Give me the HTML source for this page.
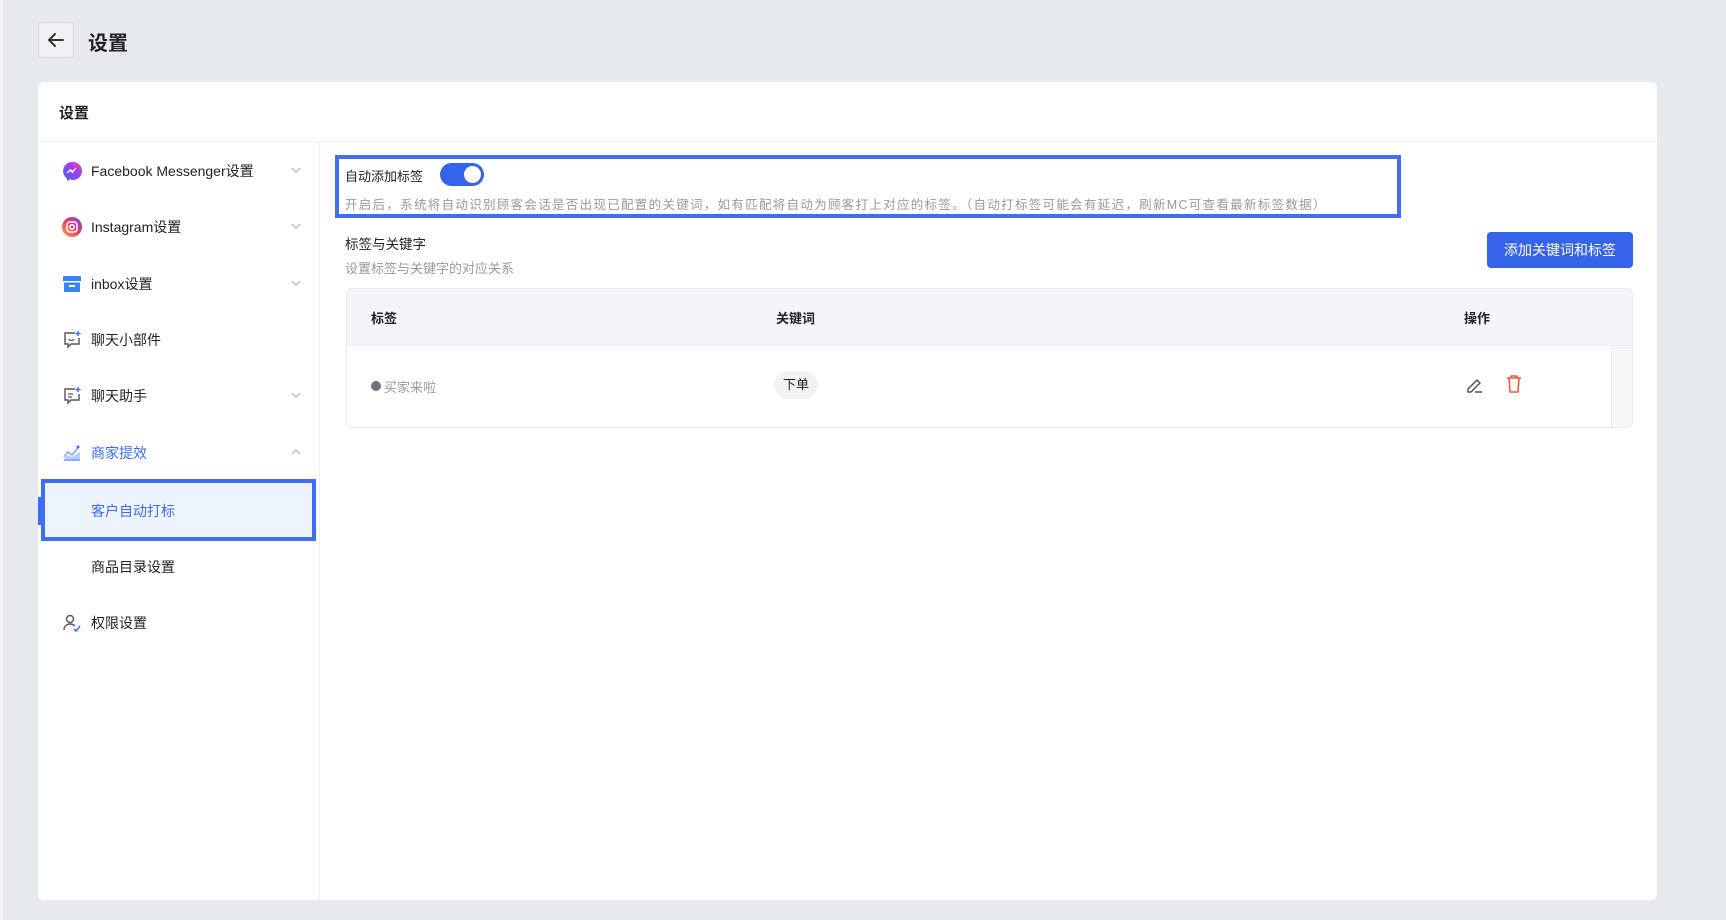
<!DOCTYPE html>
<html><head><meta charset="utf-8">
<style>
*{box-sizing:border-box;margin:0;padding:0}
body{width:1726px;height:920px;background:#e6e9ee;font-family:"Liberation Sans","Noto Sans CJK SC",sans-serif;color:#222;position:relative;overflow:hidden}
.abs{position:absolute}
.back{left:38px;top:22px;width:36px;height:36px;border:1px solid #d4d8de;border-radius:4px;background:#eef0f3}
.card{left:38px;top:82px;width:1619px;height:818px;background:#fff;border-radius:6px}
.item{position:absolute;left:0;width:281px;height:40px;font-size:14px;display:flex;align-items:center}
.item .ic{position:absolute;left:24px;top:10px;width:20px;height:20px}
.item .tx{position:absolute;left:53px}
.chev{position:absolute;right:18px;top:14px}
.gray{color:#999}
</style></head><body>
<div class="abs" style="left:0;top:0;width:3px;height:920px;background:#f2f3f5"></div>
<div class="abs back"><svg width="34" height="34" viewBox="0 0 34 34"><path d="M24 17H11M16 11l-6 6 6 6" fill="none" stroke="#333" stroke-width="2" stroke-linecap="round" stroke-linejoin="round"/></svg></div>
<div class="abs" style="left:88px;top:27px;font-size:20px;font-weight:bold;color:#222">设置</div>
<div class="abs card">
 <div class="abs" style="left:21px;top:20px;font-size:15px;font-weight:bold">设置</div>
 <div class="abs" style="left:0;top:59px;width:1619px;height:1px;background:#eef0f3"></div>
 <div class="abs" style="left:281px;top:60px;width:1px;height:758px;background:#eef0f3"></div>
 <div class="item" style="top:69px"><svg class="ic" viewBox="0 0 20 20"><defs><linearGradient id="m" x1="0" y1="1" x2="1" y2="0"><stop offset="0" stop-color="#3b6cf6"/><stop offset=".6" stop-color="#a33cf0"/><stop offset="1" stop-color="#f25c7c"/></linearGradient></defs><path d="M10 1a9 9 0 0 0-5 16.4V20l3-1.6A9 9 0 1 0 10 1z" fill="url(#m)"/><path d="M5 12l3.5-3.5 2 2L14 7l-3.5 4.5-2-2z" fill="#fff" stroke="#fff" stroke-width="1"/></svg><span class="tx">Facebook Messenger设置</span><svg class="chev" width="10" height="10" viewBox="0 0 10 10"><path d="M1 3l4 4 4-4" fill="none" stroke="#bbb" stroke-width="1.3"/></svg></div>
 <div class="item" style="top:125px"><svg class="ic" viewBox="0 0 20 20"><defs><linearGradient id="ig" x1="0" y1="1" x2="1" y2="0"><stop offset="0" stop-color="#fbb040"/><stop offset=".5" stop-color="#e93c6c"/><stop offset="1" stop-color="#7b3cf0"/></linearGradient></defs><circle cx="10" cy="10" r="10" fill="url(#ig)"/><rect x="5" y="5" width="10" height="10" rx="3" fill="none" stroke="#fff" stroke-width="1.5"/><circle cx="10" cy="10" r="2.3" fill="none" stroke="#fff" stroke-width="1.5"/></svg><span class="tx">Instagram设置</span><svg class="chev" width="10" height="10" viewBox="0 0 10 10"><path d="M1 3l4 4 4-4" fill="none" stroke="#bbb" stroke-width="1.3"/></svg></div>
 <div class="item" style="top:182px"><svg class="ic" viewBox="0 0 20 20"><rect x="1" y="2" width="18" height="6" rx="1.5" fill="#3b82f6"/><rect x="2" y="8" width="16" height="10" rx="1" fill="#3b82f6"/><rect x="7" y="11" width="6" height="2" fill="#fff"/><rect x="1" y="7" width="18" height="1.5" fill="#fff"/></svg><span class="tx">inbox设置</span><svg class="chev" width="10" height="10" viewBox="0 0 10 10"><path d="M1 3l4 4 4-4" fill="none" stroke="#bbb" stroke-width="1.3"/></svg></div>
 <div class="item" style="top:238px"><svg class="ic" viewBox="0 0 20 20"><path d="M13 3H3v11h3v3l3-3h8V8" fill="none" stroke="#555" stroke-width="1.4"/><path d="M7 9c1 2 4 2 5 0" fill="none" stroke="#555" stroke-width="1.3"/><path d="M16 1v5M13.5 3.5h5" stroke="#3b6cf6" stroke-width="1.4"/></svg><span class="tx">聊天小部件</span></div>
 <div class="item" style="top:294px"><svg class="ic" viewBox="0 0 20 20"><path d="M13 3H3v11h3v3l3-3h8V8" fill="none" stroke="#555" stroke-width="1.4"/><path d="M6 8h5M6 11h4" stroke="#555" stroke-width="1.3"/><path d="M16 1v5M13.5 3.5h5" stroke="#3b6cf6" stroke-width="1.4"/></svg><span class="tx">聊天助手</span><svg class="chev" width="10" height="10" viewBox="0 0 10 10"><path d="M1 3l4 4 4-4" fill="none" stroke="#bbb" stroke-width="1.3"/></svg></div>
 <div class="item" style="top:351px;color:#3b6cf6"><svg class="ic" viewBox="0 0 20 20"><path d="M2 17h16" stroke="#8fb0f8" stroke-width="2"/><path d="M2 14l4-5 4 3 6-7" fill="none" stroke="#8fb0f8" stroke-width="1.8"/><path d="M2 16l4-4 4 2 8-5v7H2z" fill="#b8cdfb"/><circle cx="16" cy="4" r="1.5" fill="#3b6cf6"/></svg><span class="tx">商家提效</span><svg class="chev" width="10" height="10" viewBox="0 0 10 10"><path d="M1 7l4-4 4 4" fill="none" stroke="#bbb" stroke-width="1.3"/></svg></div>
 <div class="abs" style="left:0;top:415px;width:3px;height:28px;background:#3b6cf6"></div>
 <div class="abs" style="left:3px;top:397px;width:275px;height:62px;background:#edf4fe;border:4px solid #3f6ef3"></div>
 <div class="abs" style="left:53px;top:419px;font-size:14px;color:#3b6cf6">客户自动打标</div>
 <div class="abs" style="left:53px;top:475px;font-size:14px">商品目录设置</div>
 <div class="item" style="top:521px"><svg class="ic" viewBox="0 0 20 20"><circle cx="8" cy="6" r="3.5" fill="none" stroke="#555" stroke-width="1.4"/><path d="M2 17c0-4 3-6 6-6s4 1 5 2" fill="none" stroke="#555" stroke-width="1.4"/><path d="M12 16l2 2 4-5" fill="none" stroke="#3b6cf6" stroke-width="1.5"/></svg><span class="tx">权限设置</span></div>
 <div class="abs" style="left:297px;top:73px;width:1066px;height:63px;border:4px solid #3f6ef3"></div>
 <div class="abs" style="left:307px;top:84px;font-size:13px">自动添加标签</div>
 <div class="abs" style="left:402px;top:81px;width:44px;height:23px;border-radius:12px;background:#3563ea"><div style="position:absolute;right:3px;top:3px;width:17px;height:17px;border-radius:50%;background:#fff"></div></div>
 <div class="abs gray" style="left:307px;top:112px;font-size:12.5px;letter-spacing:1.3px;white-space:nowrap">开启后，系统将自动识别顾客会话是否出现已配置的关键词，如有匹配将自动为顾客打上对应的标签。（自动打标签可能会有延迟，刷新MC可查看最新标签数据）</div>
 <div class="abs" style="left:307px;top:151px;font-size:13.5px">标签与关键字</div>
 <div class="abs gray" style="left:307px;top:176px;font-size:13px">设置标签与关键字的对应关系</div>
 <div class="abs" style="left:1449px;top:150px;width:146px;height:36px;background:#3563ea;border-radius:4px;color:#fff;font-size:14px;text-align:center;line-height:36px">添加关键词和标签</div>
 <div class="abs" style="left:308px;top:206px;width:1287px;height:140px;border:1px solid #e8ebf0;border-radius:6px;overflow:hidden">
  <div class="abs" style="left:0;top:0;width:100%;height:57px;background:#f3f5f9;border-bottom:1px solid #e8ebf0"></div>
  <div class="abs" style="left:24px;top:19px;font-size:13px;font-weight:bold">标签</div>
  <div class="abs" style="left:429px;top:19px;font-size:13px;font-weight:bold">关键词</div>
  <div class="abs" style="left:1117px;top:19px;font-size:13px;font-weight:bold">操作</div>
  <div class="abs" style="left:1264px;top:57px;width:22px;height:83px;background:#f7f7f8;border-left:1px solid #e8ebf0"></div>
  <div class="abs" style="left:24px;top:92px;width:10px;height:10px;border-radius:50%;background:#6b7280"></div>
  <div class="abs gray" style="left:37px;top:88px;font-size:13px">买家来啦</div>
  <div class="abs" style="left:427px;top:82px;width:44px;height:28px;border-radius:14px;background:#f1f2f4;font-size:13px;text-align:center;line-height:28px">下单</div>
  <svg class="abs" style="left:1118px;top:86px" width="20" height="20" viewBox="0 0 20 20"><path d="M3 14l9-9 3 3-9 9H3z" fill="none" stroke="#555" stroke-width="1.5" stroke-linejoin="round"/><path d="M10 17h7" stroke="#555" stroke-width="1.5"/></svg>
  <svg class="abs" style="left:1158px;top:85px" width="18" height="20" viewBox="0 0 18 20"><path d="M2 4h14M6 4V2h6v2M4 4l1 14h8l1-14" fill="none" stroke="#ea5a3c" stroke-width="1.6" stroke-linejoin="round"/></svg>
 </div>
</div>
</body></html>
